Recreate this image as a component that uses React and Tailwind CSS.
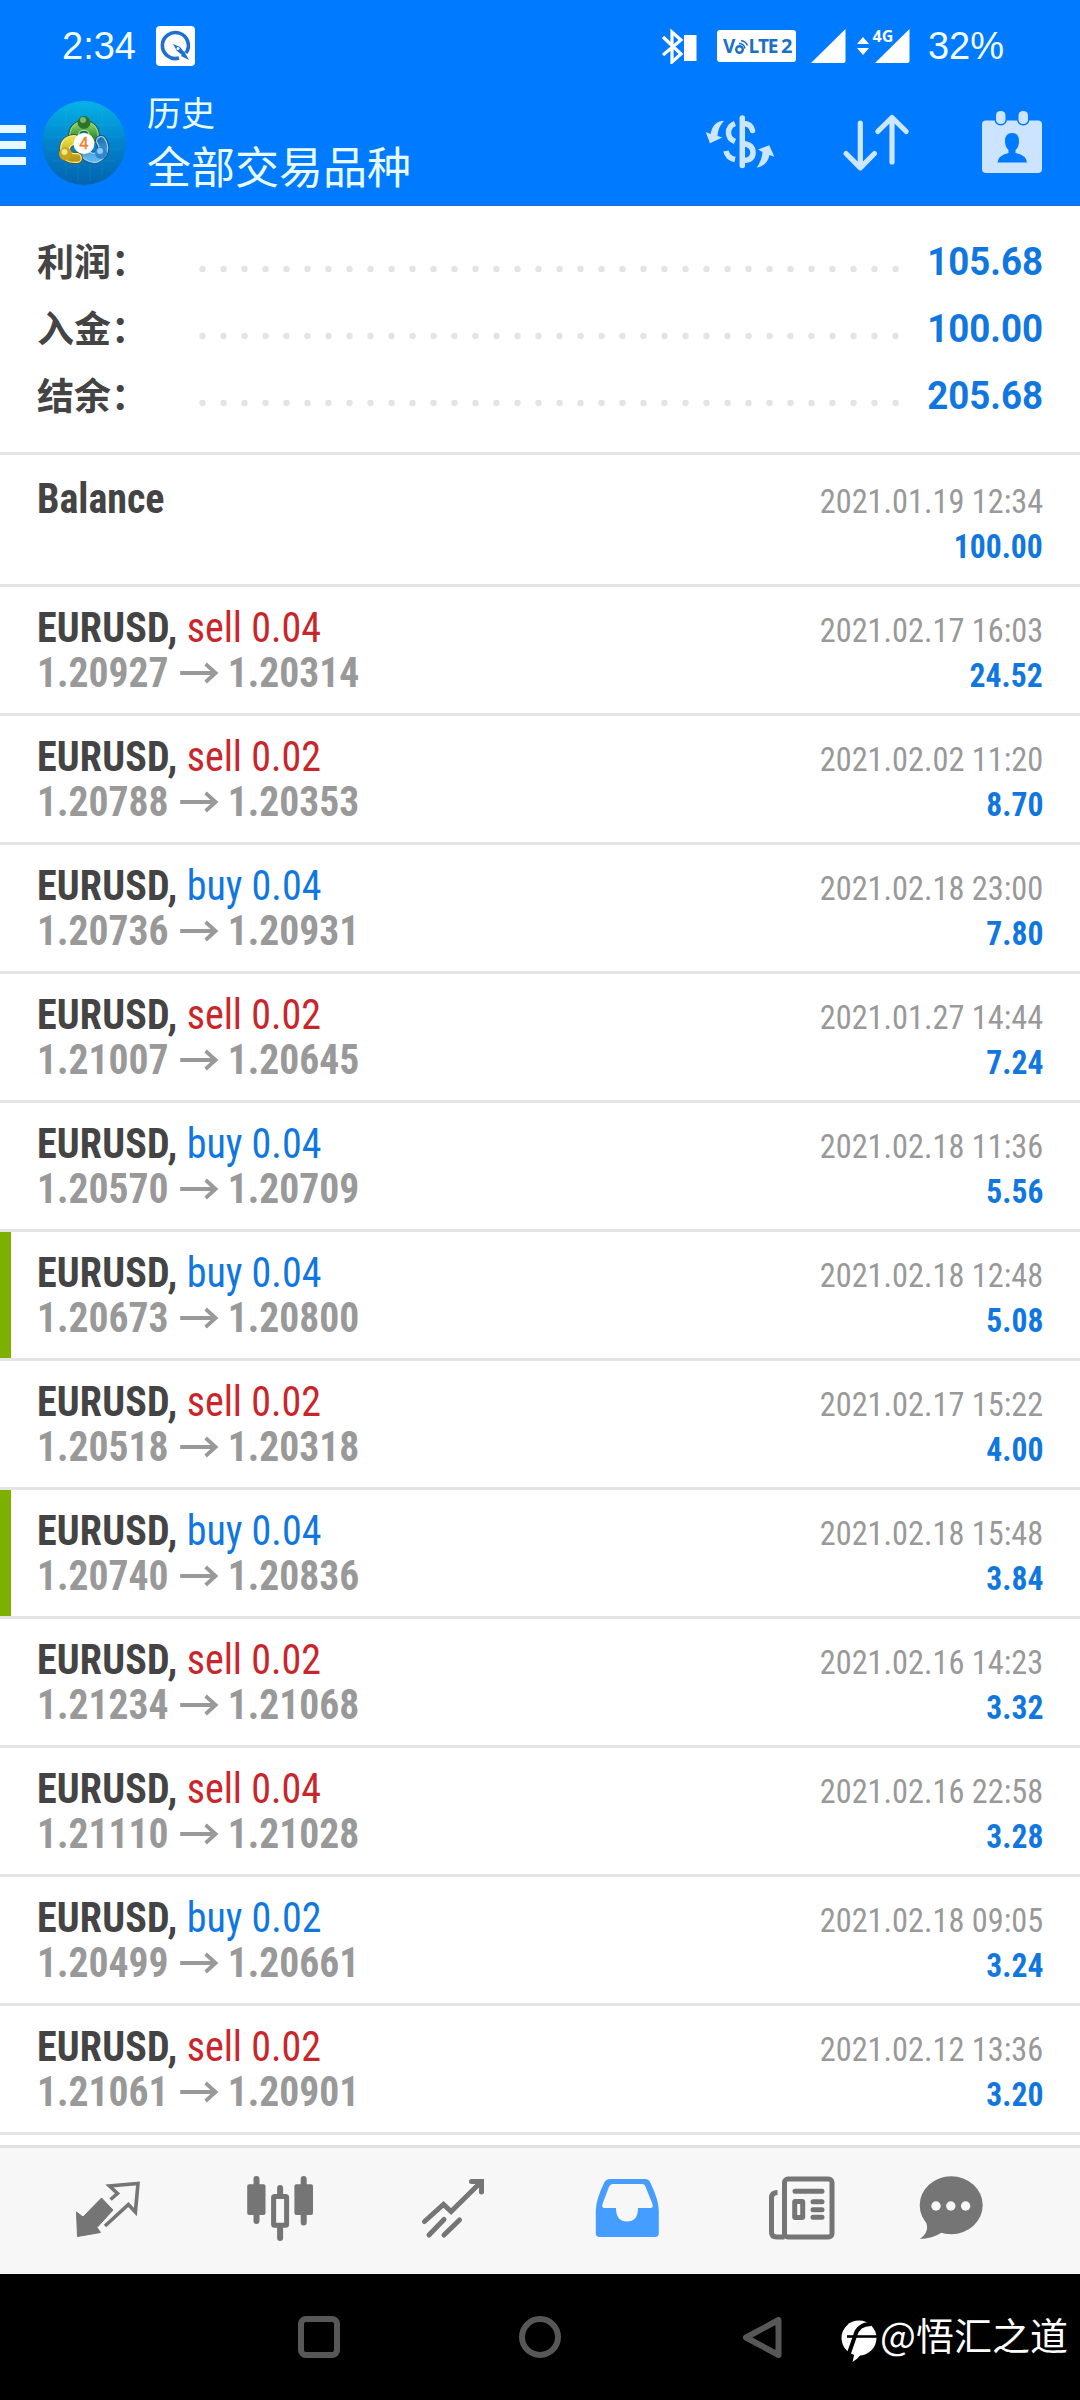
import clsx from 'clsx'

const summary = [
  { label: '利润：', value: '105.68' },
  { label: '入金：', value: '100.00' },
  { label: '结余：', value: '205.68' },
]

const deals = [
  { side: 'sell', volume: '0.04', open: '1.20927', close: '1.20314', time: '2021.02.17 16:03', profit: '24.52' },
  { side: 'sell', volume: '0.02', open: '1.20788', close: '1.20353', time: '2021.02.02 11:20', profit: '8.70' },
  { side: 'buy', volume: '0.04', open: '1.20736', close: '1.20931', time: '2021.02.18 23:00', profit: '7.80' },
  { side: 'sell', volume: '0.02', open: '1.21007', close: '1.20645', time: '2021.01.27 14:44', profit: '7.24' },
  { side: 'buy', volume: '0.04', open: '1.20570', close: '1.20709', time: '2021.02.18 11:36', profit: '5.56' },
  { side: 'buy', volume: '0.04', open: '1.20673', close: '1.20800', time: '2021.02.18 12:48', profit: '5.08', marked: true },
  { side: 'sell', volume: '0.02', open: '1.20518', close: '1.20318', time: '2021.02.17 15:22', profit: '4.00' },
  { side: 'buy', volume: '0.04', open: '1.20740', close: '1.20836', time: '2021.02.18 15:48', profit: '3.84', marked: true },
  { side: 'sell', volume: '0.02', open: '1.21234', close: '1.21068', time: '2021.02.16 14:23', profit: '3.32' },
  { side: 'sell', volume: '0.04', open: '1.21110', close: '1.21028', time: '2021.02.16 22:58', profit: '3.28' },
  { side: 'buy', volume: '0.02', open: '1.20499', close: '1.20661', time: '2021.02.18 09:05', profit: '3.24' },
  { side: 'sell', volume: '0.02', open: '1.21061', close: '1.20901', time: '2021.02.12 13:36', profit: '3.20' },
]

function StatusBar() {
  return (
    <div className="flex h-[92px] items-center pl-[62px] pr-[76px] text-[38px] leading-none text-[#f0fcff] font-['Liberation_Sans',sans-serif]">
      <span>2:34</span>
      <svg className="ml-[20px] h-[40px] w-[39px]" viewBox="0 0 39 40">
        <rect width="39" height="40" rx="4" fill="#fff" />
        <path d="M30 27A13 13 0 1 0 23 32" fill="none" stroke="#1c70d0" strokeWidth="3.6" />
        <path d="M17 18l7 3 4 5-2 3-5-4z M25 30l3-5 5 9z" fill="#1c70d0" />
        <circle cx="22" cy="22.500" r="1.500" fill="#fff" />
      </svg>
      <svg className="ml-auto h-[36px] w-[37px]" viewBox="0 0 37 36">
        <path d="M2 9l18 17-9 8V4l9 8L2 27" fill="none" stroke="#fff" strokeWidth="3.200" />
        <rect x="23" y="7" width="12.500" height="26" fill="#fff" />
      </svg>
      <svg className="ml-[19px] h-[32px] w-[79px]" viewBox="0 0 79 32">
        <rect width="79" height="32" rx="3" fill="#fff" />
        <g fill="#1c6fc8" fontFamily="Open Sans, sans-serif" fontWeight="700">
          <text x="6" y="23" fontSize="19">V</text>
          <text x="31.500" y="23" fontSize="19" textLength="30">LTE</text>
          <text x="64" y="23" fontSize="20">2</text>
        </g>
        <g fill="none" stroke="#1c6fc8">
          <circle cx="22.500" cy="19.500" r="3.300" strokeWidth="2.400" />
          <path d="M22 13.500q5 0 6 5M24 10.500q5 1 6.500 5" strokeWidth="1.500" />
        </g>
      </svg>
      <svg className="ml-[15px] h-[36px] w-[35px]" viewBox="0 0 35 36">
        <path d="M34.500 1v32q0 2-2 2H0z" fill="#fff" />
      </svg>
      <svg className="ml-[10px] h-[36px] w-[54px] overflow-visible" viewBox="0 0 54 36">
        <path d="M1 16l6-7 6 7zM1 20l6 7 6-7zM53.500 1v32q0 2-2 2H19z" fill="#fff" />
        <text x="16.500" y="13.500" fontSize="16" fontWeight="700" fill="#fff" stroke="#007bff" strokeWidth="3" paintOrder="stroke" fontFamily="Open Sans, sans-serif">4G</text>
      </svg>
      <span className="ml-[18px]">32%</span>
    </div>
  )
}

function AppLogo() {
  return (
    <svg className="h-[84px] w-[84px]" viewBox="0 0 84 84">
      <defs>
        <linearGradient id="sky" x1="0" y1="0" x2="0" y2="1">
          <stop offset="0" stopColor="#06b3e6" />
          <stop offset="0.5" stopColor="#0283cc" />
          <stop offset="1" stopColor="#0463ae" />
        </linearGradient>
        <linearGradient id="green" x1="0" y1="0" x2="0" y2="1">
          <stop offset="0" stopColor="#7cc463" />
          <stop offset="1" stopColor="#2c8a2c" />
        </linearGradient>
        <linearGradient id="yellow" x1="0" y1="0" x2="0" y2="1">
          <stop offset="0" stopColor="#e6dc48" />
          <stop offset="1" stopColor="#b99a18" />
        </linearGradient>
        <linearGradient id="blue" x1="0" y1="0" x2="0" y2="1">
          <stop offset="0" stopColor="#2478b4" />
          <stop offset="1" stopColor="#5db4ee" />
        </linearGradient>
      </defs>
      <circle cx="42" cy="42" r="42" fill="url(#sky)" />
      <path d="M24 10v64M36 4v76M48 4v76M60 10v64M10 24h64M4 36h76M4 48h76M10 60h64" stroke="#2fb2e6" strokeOpacity="0.2" />
      <g fill="none" strokeLinecap="round">
        <path d="M32 36q0-11 10-11t10 12" stroke="#1d5d36" strokeWidth="12" />
        <path d="M32 36q0-11 10-11t10 12" stroke="#a8dc90" strokeWidth="10" />
        <path d="M32 36q0-11 10-11t10 12" stroke="url(#green)" strokeWidth="7.500" />
        <path d="M59 40q4 6 1 12-6 8-14 3-5-3-6-7" stroke="#1a4f80" strokeWidth="12" />
        <path d="M59 40q4 6 1 12-6 8-14 3-5-3-6-7" stroke="#9cd2f4" strokeWidth="10" />
        <path d="M59 40q4 6 1 12-6 8-14 3-5-3-6-7" stroke="url(#blue)" strokeWidth="7.500" />
        <path d="M32 39q-9 1-9 10 1 9 12 8" stroke="#5c5a1c" strokeWidth="12" />
        <path d="M32 39q-9 1-9 10 1 9 12 8" stroke="#f4ee9c" strokeWidth="10" />
        <path d="M32 39q-9 1-9 10 1 9 12 8" stroke="url(#yellow)" strokeWidth="7.500" />
      </g>
      <circle cx="42" cy="21.500" r="6.500" fill="#2c7428" />
      <circle cx="41" cy="19" r="3" fill="#7cb870" />
      <circle cx="23.500" cy="53" r="6.500" fill="#c8a41c" />
      <circle cx="22.500" cy="51" r="3" fill="#f4e67c" />
      <circle cx="59" cy="52" r="6" fill="#2f86cc" />
      <circle cx="58" cy="50" r="3" fill="#86ccf6" />
      <circle cx="42" cy="42.500" r="10.500" fill="#fff" />
      <text x="42" y="48" textAnchor="middle" fontSize="16" fill="#ee7f2c" stroke="#ee7f2c" strokeWidth="0.500" fontFamily="Liberation Sans, sans-serif">4</text>
    </svg>
  )
}

function Header() {
  return (
    <header className="h-[206px] shrink-0 border-b border-[#1a6ac8] bg-[#007bff]">
      <div className="h-[60px]">
        <StatusBar />
      </div>
      <div className="flex h-[145px] items-start pt-[28px]">
        <div className="mt-[37px] flex w-[26px] flex-col gap-[8px]">
          <span className="h-[8px] bg-[#e8f8ff]" />
          <span className="h-[8px] bg-[#e8f8ff]" />
          <span className="h-[8px] bg-[#e8f8ff]" />
        </div>
        <div className="ml-[16px] mt-[13px]">
          <AppLogo />
        </div>
        <div className="ml-[21px] text-[#e8fbff] font-['Noto_Sans_CJK_SC',sans-serif]">
          <div className="text-[34px] leading-[48px]">历史</div>
          <div className="text-[44px] leading-[58px]">全部交易品种</div>
        </div>
        <svg className="ml-auto mt-[24px] h-[60px] w-[72px]" viewBox="0 0 72 60">
          <g fill="none" stroke="#cce6ff" strokeWidth="5.500">
            <path d="M38.300 6v47.500" strokeLinecap="round" />
            <path d="M31 11.500Q24.500 14 24.500 20.500T31 29.500M22 39Q23.500 46 31 47.500" />
            <path d="M39 11.500q8 0 9.500 7M39 31.500q10 1 10 9t-10 8" strokeLinecap="round" />
          </g>
          <path d="M20 8.700Q9 9 6.500 22L1.700 20 6 31.300 18.300 25.500 13.500 24Q14 15 20 8.700z" fill="#cce6ff" />
          <path d="M52.700 55.700Q63 54 65.500 43L70.300 44.700 65.300 33.300 54 37.500 58.500 40Q58 48 52.700 55.700z" fill="#cce6ff" />
        </svg>
        <svg className="ml-[64px] mt-[24px] h-[60px] w-[72px]" viewBox="0 0 72 60">
          <path
            d="M20.300 11v44M6 41.500l14.300 14.300L34.500 41.500M52 6v44M37.800 19.500L52 5.500l14.200 14"
            fill="none"
            stroke="#cce6ff"
            strokeWidth="5.200"
            strokeLinecap="round"
            strokeLinejoin="round"
          />
        </svg>
        <svg className="ml-[68px] mr-[36px] mt-[20px] h-[68px] w-[64px]" viewBox="0 0 64 68">
          <rect x="2" y="12.500" width="60" height="52.500" rx="4" fill="#cce4ff" />
          <g fill="#cce4ff" stroke="#007bff" strokeWidth="3" paintOrder="stroke">
            <rect x="16" y="3" width="9.500" height="13" rx="4.500" />
            <rect x="38.500" y="3" width="9.500" height="13" rx="4.500" />
          </g>
          <path d="M32 25q7 0 7 8 0 6-3.500 9v3q11 2.500 11.500 9.500H17.500q.5-7 11-9.500v-3Q25 39 25 33q0-8 7-8z" fill="#007bff" />
        </svg>
      </div>
    </header>
  )
}

function Summary() {
  return (
    <section className="flex h-[249px] shrink-0 flex-col border-b-[3px] border-[#e4e4e4] pl-[37px] pr-[37px] pt-[21px]">
      {summary.map((s) => (
        <div key={s.label} className="flex h-[67px] items-center">
          <span className="w-[162px] text-[37px] leading-[67px] font-bold text-[#444] font-['Noto_Sans_CJK_SC',sans-serif]">{s.label}</span>
          <svg className="mt-[17px] h-[8px] w-[704px]" viewBox="0 0 704 8">
            {Array.from({ length: 34 }, (_, i) => (
              <circle key={i} cx={3.5 + i * 21} cy="4" r="3.200" fill="#e4e4e4" />
            ))}
          </svg>
          <span className="ml-auto mt-[3px] origin-right scale-x-[0.965] text-[38px] leading-[67px] font-bold text-[#1177e0] font-['Roboto',sans-serif]">{s.value}</span>
        </div>
      ))}
    </section>
  )
}

function Row({ title, prices, time, amount, marked, className }) {
  return (
    <div className={clsx('flex shrink-0 border-b-[3px] border-[#e4e4e4]', className)}>
      <div className={clsx('w-[11px]', marked && 'bg-[#7db000]')} />
      <div className="flex flex-1 flex-col justify-end pb-[18px] pl-[26px] pr-[37px]">
        <div className="flex h-[45px] items-baseline justify-between leading-[45px]">
          <div className="origin-left scale-x-[0.953] text-[42px]">{title}</div>
          <div className="origin-right scale-x-[0.95] text-[34px] text-[#999]">{time}</div>
        </div>
        <div className="flex h-[45px] items-start leading-[45px]">
          {prices && (
            <div className="flex origin-left scale-x-[0.942] items-center text-[42px] font-bold text-[#999]">{prices}</div>
          )}
          <div className="ml-auto origin-right scale-x-[0.93] pt-[3px] text-[34px] font-bold text-[#1177e0]">{amount}</div>
        </div>
      </div>
    </div>
  )
}

function DealRow({ deal }) {
  return (
    <Row
      className="h-[129px]"
      marked={deal.marked}
      time={deal.time}
      amount={deal.profit}
      title={
        <>
          <span className="tracking-[0.2px] font-bold text-[#444]">EURUSD,</span>{' '}
          <span className={deal.side === 'sell' ? 'text-[#c8262b]' : 'text-[#1177e0]'}>
            {deal.side} {deal.volume}
          </span>
        </>
      }
      prices={
        <>
          <span>{deal.open}</span>
          <svg className="ml-[11px] mr-[10px] h-[22px] w-[42px]" viewBox="0 0 42 22">
            <path d="M1 11h38M28 2l10.500 9L28 20" fill="none" stroke="#999" strokeWidth="4" />
          </svg>
          <span>{deal.close}</span>
        </>
      }
    />
  )
}

function TabBar() {
  return (
    <nav className="mt-[10px] flex h-[129px] shrink-0 items-start border-t-[3px] border-[#e0e0e0] bg-[#f7f7f7] pl-[72px] pt-[22px] text-[#757575]">
      <svg className="h-[72px] w-[72px]" viewBox="0 0 72 72">
        <path d="M4.500 42l6.500 5 18.500-19L41 40 25 57.500l3.500 5L5.500 66.500z" fill="currentColor" stroke="currentColor" strokeLinejoin="round" />
        <path d="M33 56l23.400-21.500 7 7.500L66 13.500l-28.500 2.500 8 7.500-7 6" fill="none" stroke="currentColor" strokeWidth="3.600" />
      </svg>
      <svg className="ml-[100px] h-[72px] w-[72px]" viewBox="0 0 72 72">
        <path d="M12.500 9v42M36.100 18v8M36.100 56v12M59.700 9v43.500" stroke="currentColor" strokeWidth="6" strokeLinecap="round" />
        <rect x="3.200" y="14.300" width="18.300" height="30.700" rx="2" fill="currentColor" />
        <rect x="50.400" y="14.300" width="18.600" height="30.700" rx="2" fill="currentColor" />
        <rect x="29.600" y="26.500" width="13" height="28.700" rx="1" fill="#f7f7f7" stroke="currentColor" strokeWidth="5" />
      </svg>
      <svg className="ml-[101px] h-[72px] w-[72px]" viewBox="0 0 72 72">
        <path
          d="M7.500 51.500l19-17 7.600 7L64 12M54.500 11.500H64.500v10.500M27 49.500L12 65M42.500 50L27 65"
          fill="none"
          stroke="currentColor"
          strokeWidth="5"
          strokeLinecap="round"
        />
      </svg>
      <svg className="ml-[102px] h-[72px] w-[72px]" viewBox="0 0 72 72">
        <path
          fillRule="evenodd"
          fill="#449dff"
          d="M19 9h35q4 0 5.500 4 8.300 17 8.300 28v22q0 4-4 4H8.800q-4 0-4-4V41q0-11 8.200-28 2-4 6-4zM22 14q-3 0-4.500 4L11.500 34q-1 4 2 4h11.500q0 13.500 11 13.500t11-13.500h12.500q3 0 2-4L55 18q-1-4-4-4z"
        />
      </svg>
      <svg className="ml-[103px] h-[72px] w-[72px]" viewBox="0 0 72 72">
        <g fill="none" stroke="currentColor">
          <rect x="18.500" y="9" width="47.500" height="58" rx="3.500" strokeWidth="5" />
          <path d="M11.500 22.500q-6 0-6 5.500V62q0 5 5 5h8" strokeWidth="5" />
          <path d="M29 21.300h27M47 31.700h9M47 39.700h9M47 47.300h9" strokeWidth="5" strokeLinecap="round" />
          <rect x="28.700" y="31.500" width="8" height="16" rx="0.500" strokeWidth="5" />
        </g>
      </svg>
      <svg className="ml-[77px] h-[72px] w-[72px]" viewBox="0 0 72 72">
        <ellipse cx="36.200" cy="35.200" rx="31.500" ry="29" fill="currentColor" />
        <path d="M10 50q6 11-5.200 19 12 0 22-6.500L36 50z" fill="currentColor" />
        <g fill="#f7f7f7">
          <circle cx="21" cy="36" r="4.700" />
          <circle cx="35.800" cy="36" r="4.700" />
          <circle cx="50.600" cy="36" r="4.700" />
        </g>
      </svg>
    </nav>
  )
}

function SystemNav() {
  return (
    <div className="flex h-[126px] shrink-0 items-start bg-black pl-[298px] pt-[38px]">
      <div className="mt-[4px] h-[42px] w-[42px] rounded-[8px] border-[6px] border-[#575757]" />
      <div className="ml-[179px] mt-[4px] h-[42px] w-[42px] rounded-full border-[6px] border-[#575757]" />
      <svg className="ml-[181px] mt-[4px] h-[43px] w-[40px]" viewBox="0 0 40 43">
        <path d="M36.500 4v35L4 21.500z" fill="none" stroke="#575757" strokeWidth="6" strokeLinejoin="round" />
      </svg>
      <svg className="ml-[59px] mt-[8px] h-[42px] w-[36px]" viewBox="0 0 36 42">
        <circle cx="18" cy="18" r="17.500" fill="#fff" />
        <path d="M30 4Q17 4 14 16L7 36" fill="none" stroke="#000" strokeWidth="4" />
        <path d="M6 16.500h30" stroke="#000" strokeWidth="2.600" />
        <path d="M14 31l-2.500 11q4-2 8-7z" fill="#fff" />
      </svg>
      <span className="-mt-[1px] ml-[3px] text-[38px] leading-[46px] whitespace-nowrap text-white font-['Noto_Sans_CJK_SC',sans-serif]">@悟汇之道</span>
    </div>
  )
}

export default function App() {
  return (
    <div className="flex h-[2400px] w-[1080px] flex-col overflow-hidden bg-white">
      <Header />
      <Summary />
      <main className="flex flex-col font-stretch-condensed font-['Roboto_Condensed','Roboto',sans-serif]">
        <Row
          className="h-[132px]"
          title={<span className="font-bold text-[#444]">Balance</span>}
          time="2021.01.19 12:34"
          amount="100.00"
        />
        {deals.map((deal) => (
          <DealRow key={deal.time} deal={deal} />
        ))}
      </main>
      <TabBar />
      <SystemNav />
    </div>
  )
}
